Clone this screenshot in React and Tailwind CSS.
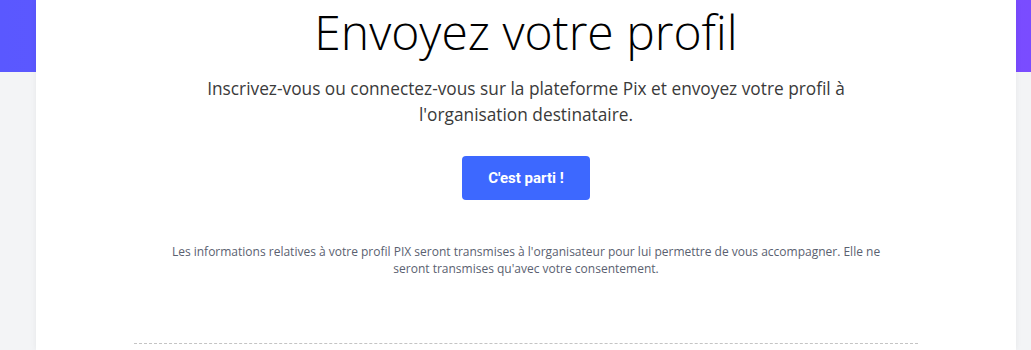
import React from 'react';

const App = () => {
  return (
    <div className="relative min-h-[350px] bg-[#f3f4f6] overflow-hidden" style={{ fontFamily: '"Open Sans", sans-serif' }}>
      {/* Banner */}
      <div className="absolute top-0 left-0 right-0 h-[72px] bg-gradient-to-r from-[#5a58ff] to-[#7a4cff]"></div>

      <div className="relative mx-[36px] w-[980px] min-h-[350px] bg-white shadow-[0_0_6px_rgba(0,0,0,0.06)]">
        <div className="flex flex-col items-center">
          <h1 className="mt-[0px] text-[48px] leading-[64px] font-light text-black">
            Envoyez votre profil
          </h1>
          <p className="mt-[12px] w-[680px] text-center text-[17.3px] leading-[26px] text-[#3a3a3a]">
            Inscrivez-vous ou connectez-vous sur la plateforme Pix et envoyez votre profil à l'organisation destinataire.
          </p>
          <button
            className="mt-[28px] w-[128px] h-[44px] rounded-[4px] bg-[#3d68ff] text-white text-[15px] font-bold"
            style={{ fontFamily: 'Roboto, sans-serif' }}
          >
            C'est parti !
          </button>
          <p className="mt-[43px] w-[720px] text-center text-[12px] leading-[17px] text-[#5a6170]">
            Les informations relatives à votre profil PIX seront transmises à l'organisateur pour lui permettre de vous accompagner. Elle ne seront transmises qu'avec votre consentement.
          </p>
          <div className="mt-[66px] w-[784px] border-t border-dashed border-[#c4c4c4]"></div>
        </div>
      </div>
    </div>
  );
};

export default App;
